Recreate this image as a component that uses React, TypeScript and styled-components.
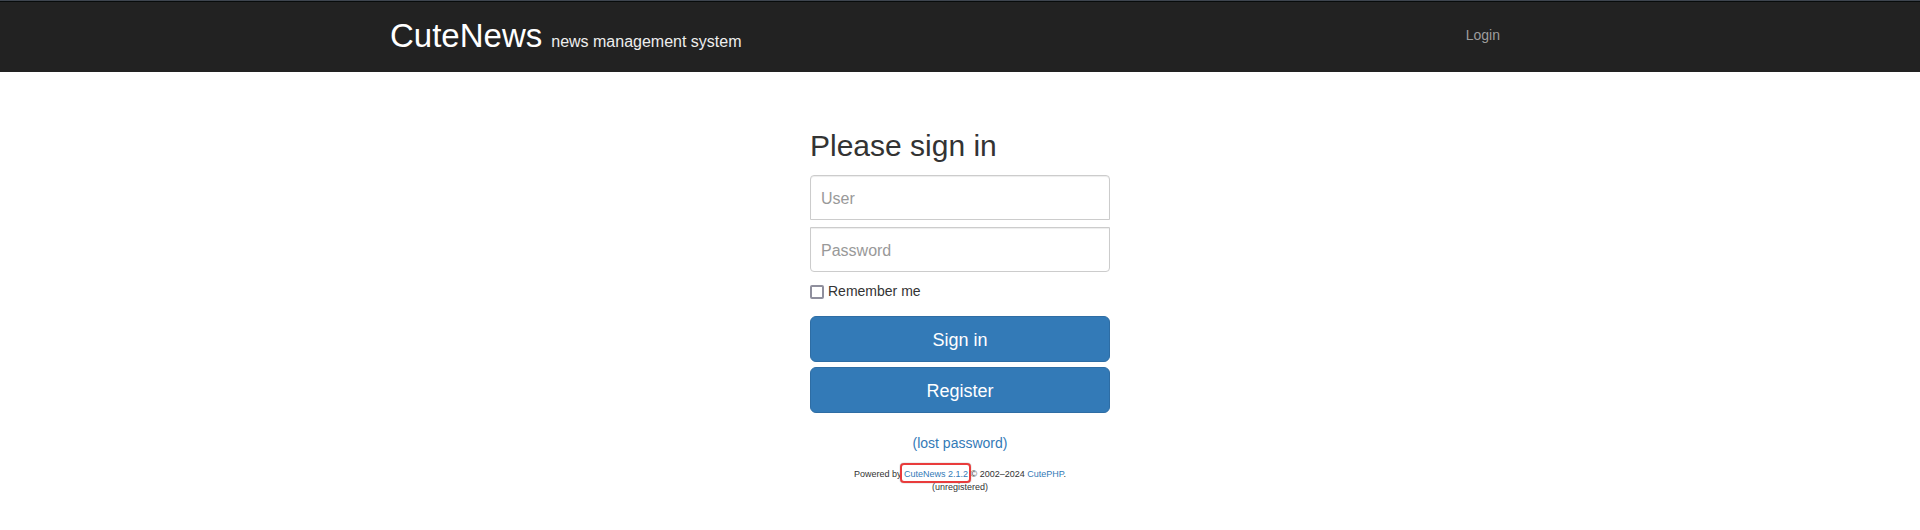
import React from "react";
import styled, { createGlobalStyle } from "styled-components";

const GlobalStyle = createGlobalStyle`
  *, *::before, *::after { box-sizing: border-box; }
  body {
    margin: 0;
    background: #fff;
    color: #333;
    font: 14px/20px "Liberation Sans", Helvetica, Arial, sans-serif;
  }
`;

const Navbar = styled.header`
  height: 72px;
  background: #222;
  border-top: 1px solid #3e454f;
  box-shadow: inset 0 1px #080c0c;
`;

const NavInner = styled.div`
  max-width: 1170px;
  margin: 0 auto;
  padding: 10px 45px 0 15px;
  display: flex;
  justify-content: space-between;
`;

const Brand = styled.a`
  display: flex;
  align-items: baseline;
  gap: 9px;
  color: #fff;
  font-size: 33px;
  line-height: 50px;
  text-decoration: none;
`;

const Tagline = styled.small`
  color: #eee;
  font-size: 16px;
`;

const NavLink = styled.a`
  padding-top: 14px;
  color: #9d9d9d;
  text-decoration: none;
`;

const SignInForm = styled.form`
  width: 100%;
  max-width: 300px;
  margin: 56px auto 0;
  display: flex;
  flex-direction: column;
`;

const Heading = styled.h2`
  margin: 0 0 11px;
  font-size: 30px;
  font-weight: 400;
  line-height: 36px;
`;

const TextField = styled.input<{ $last?: boolean }>`
  height: 45px;
  margin-bottom: ${(p) => (p.$last ? 9 : 7)}px;
  padding: 12px 10px 10px;
  border: 1px solid #ccc;
  border-radius: ${(p) => (p.$last ? "0 0 4px 4px" : "4px 4px 0 0")};
  box-shadow: inset 0 1px 1px rgba(0, 0, 0, 0.075);
  background: #fff;
  color: #555;
  font: inherit;
  font-size: 16px;

  &::placeholder { color: #999; }
`;

const CheckLabel = styled.label`
  display: flex;
  align-items: center;
  gap: 4px;
  margin-bottom: 15px;
`;

const Checkbox = styled.input`
  appearance: none;
  width: 14px;
  height: 14px;
  margin: 2px 0 0;
  border: 2px solid #8f8f9d;
  border-radius: 2px;
  background: #fff;

  &:checked { background: #337ab7; }
`;

const PrimaryButton = styled.button`
  height: 46px;
  margin-bottom: 5px;
  padding: 2px 16px 0;
  border: 1px solid #2e6da4;
  border-radius: 6px;
  background: #337ab7;
  color: #fff;
  font: inherit;
  font-size: 18px;
  cursor: pointer;
`;

const TextLink = styled.a`
  color: #337ab7;
  text-decoration: none;
`;

const LostPassword = styled.p`
  margin: 15px 0 0;
  text-align: center;
`;

const Footer = styled.footer`
  margin-top: 15px;
  font-size: 9px;
  line-height: 13px;
  text-align: center;
`;

const MarkedLink = styled(TextLink)`
  position: relative;

  &::after {
    content: "";
    position: absolute;
    inset: -6px -3px -4px -4px;
    border: 2px solid #e93c3c;
    border-radius: 4px;
    box-shadow: 0 0 1px #555;
    pointer-events: none;
  }
`;

export default function App() {
  return (
    <>
      <GlobalStyle />
      <Navbar>
        <NavInner>
          <Brand href="#">
            CuteNews <Tagline>news management system</Tagline>
          </Brand>
          <NavLink href="#login">Login</NavLink>
        </NavInner>
      </Navbar>
      <main>
        <SignInForm onSubmit={(e) => e.preventDefault()}>
          <Heading>Please sign in</Heading>
          <TextField type="text" placeholder="User" aria-label="User" />
          <TextField $last type="password" placeholder="Password" aria-label="Password" />
          <CheckLabel>
            <Checkbox type="checkbox" />
            Remember me
          </CheckLabel>
          <PrimaryButton type="submit">Sign in</PrimaryButton>
          <PrimaryButton type="button">Register</PrimaryButton>
          <LostPassword>
            <TextLink href="#lost">(lost password)</TextLink>
          </LostPassword>
        </SignInForm>
      </main>
      <Footer>
        Powered by <MarkedLink href="#cutenews">CuteNews 2.1.2</MarkedLink> © 2002–2024{" "}
        <TextLink href="#cutephp">CutePHP</TextLink>.
        <br />
        (unregistered)
      </Footer>
    </>
  );
}
